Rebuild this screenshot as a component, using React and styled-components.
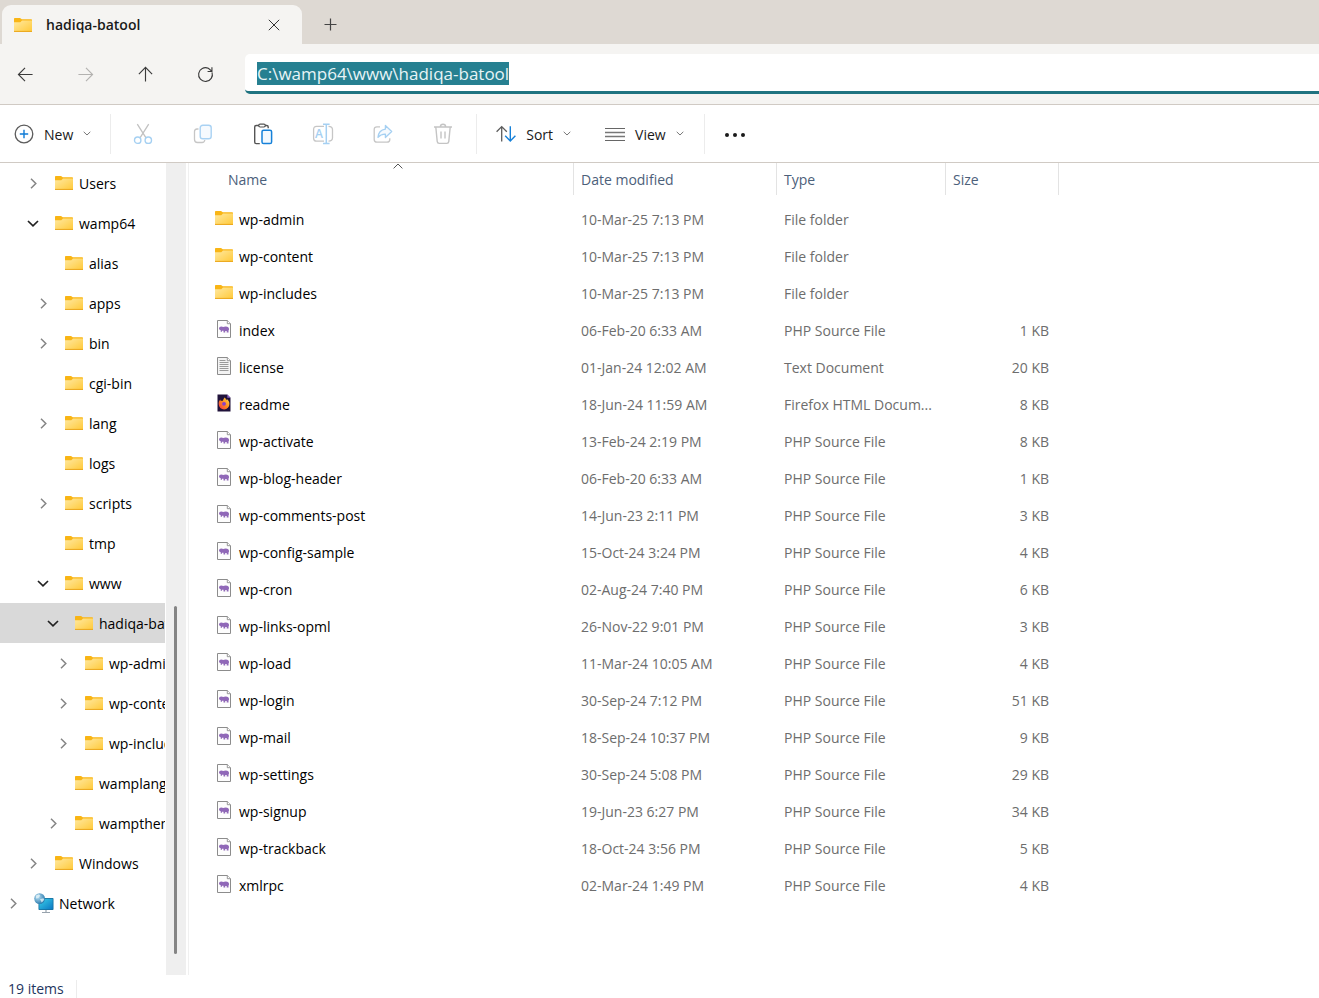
import { useEffect, useRef } from "react";
import styled, { createGlobalStyle } from "styled-components";

const tree = [
  { name: "Users", depth: 2, state: "closed" },
  { name: "wamp64", depth: 2, state: "open" },
  { name: "alias", depth: 3 },
  { name: "apps", depth: 3, state: "closed" },
  { name: "bin", depth: 3, state: "closed" },
  { name: "cgi-bin", depth: 3 },
  { name: "lang", depth: 3, state: "closed" },
  { name: "logs", depth: 3 },
  { name: "scripts", depth: 3, state: "closed" },
  { name: "tmp", depth: 3 },
  { name: "www", depth: 3, state: "open" },
  { name: "hadiqa-batool", depth: 4, state: "open", selected: true },
  { name: "wp-admin", depth: 5, state: "closed" },
  { name: "wp-content", depth: 5, state: "closed" },
  { name: "wp-includes", depth: 5, state: "closed" },
  { name: "wamplangues", depth: 4 },
  { name: "wampthemes", depth: 4, state: "closed" },
  { name: "Windows", depth: 2, state: "closed" },
  { name: "Network", depth: 0, state: "closed", icon: "network" },
];

const files = [
  ["folder", "wp-admin", "10-Mar-25 7:13 PM", "File folder", ""],
  ["folder", "wp-content", "10-Mar-25 7:13 PM", "File folder", ""],
  ["folder", "wp-includes", "10-Mar-25 7:13 PM", "File folder", ""],
  ["php", "index", "06-Feb-20 6:33 AM", "PHP Source File", "1 KB"],
  ["text", "license", "01-Jan-24 12:02 AM", "Text Document", "20 KB"],
  ["firefox", "readme", "18-Jun-24 11:59 AM", "Firefox HTML Docum...", "8 KB"],
  ["php", "wp-activate", "13-Feb-24 2:19 PM", "PHP Source File", "8 KB"],
  ["php", "wp-blog-header", "06-Feb-20 6:33 AM", "PHP Source File", "1 KB"],
  ["php", "wp-comments-post", "14-Jun-23 2:11 PM", "PHP Source File", "3 KB"],
  ["php", "wp-config-sample", "15-Oct-24 3:24 PM", "PHP Source File", "4 KB"],
  ["php", "wp-cron", "02-Aug-24 7:40 PM", "PHP Source File", "6 KB"],
  ["php", "wp-links-opml", "26-Nov-22 9:01 PM", "PHP Source File", "3 KB"],
  ["php", "wp-load", "11-Mar-24 10:05 AM", "PHP Source File", "4 KB"],
  ["php", "wp-login", "30-Sep-24 7:12 PM", "PHP Source File", "51 KB"],
  ["php", "wp-mail", "18-Sep-24 10:37 PM", "PHP Source File", "9 KB"],
  ["php", "wp-settings", "30-Sep-24 5:08 PM", "PHP Source File", "29 KB"],
  ["php", "wp-signup", "19-Jun-23 6:27 PM", "PHP Source File", "34 KB"],
  ["php", "wp-trackback", "18-Oct-24 3:56 PM", "PHP Source File", "5 KB"],
  ["php", "xmlrpc", "02-Mar-24 1:49 PM", "PHP Source File", "4 KB"],
];

export default function App() {
  const addressRef = useRef(null);

  useEffect(() => {
    addressRef.current.focus();
    addressRef.current.select();
  }, []);

  return (
    <StyledWindow>
      <GlobalStyle />
      <IconGradients />
      <StyledTabBar>
        <StyledTab>
          <FolderIcon />
          <StyledTabTitle>hadiqa-batool</StyledTabTitle>
          <StyledTabButton type="button" aria-label="Close tab">
            <svg width="12" height="12" viewBox="0 0 12 12">
              <path d="M.8.8l10.4 10.4M11.2.8L.8 11.2" stroke="#333" />
            </svg>
          </StyledTabButton>
        </StyledTab>
        <StyledTabButton type="button" aria-label="New tab">
          <svg width="13" height="13" viewBox="0 0 13 13">
            <path d="M6.5.5v12M.5 6.5h12" stroke="#444" strokeWidth="1.2" />
          </svg>
        </StyledTabButton>
      </StyledTabBar>

      <StyledNav>
        <StyledNavButtons>
          <NavButton label="Back" d="M16.5 9H1.5M8.5 2L1.5 9l7 7" />
          <NavButton
            label="Forward"
            d="M1.5 9h15M9.5 2l7 7-7 7"
            color="#b3b2b0"
          />
          <NavButton label="Up" d="M9 16.5v-15M2 8.5l7-7 7 7" />
          <NavButton
            label="Refresh"
            d="M15.9 6.7A7.3 7.3 0 1 1 12 2.4L15.6 5.4M15.8 1.2v4.6h-4.6"
          />
        </StyledNavButtons>
        <StyledAddress
          ref={addressRef}
          type="text"
          aria-label="Address"
          spellCheck={false}
          defaultValue="C:\wamp64\www\hadiqa-batool"
        />
      </StyledNav>

      <StyledToolbar>
        <StyledToolGroup>
          <StyledMenuButton type="button">
            <NewIcon />
            <StyledLabel>New</StyledLabel>
            <ChevronDown />
          </StyledMenuButton>
        </StyledToolGroup>
        <StyledToolGroup>
          <StyledToolButton type="button" aria-label="Cut">
            <CutIcon />
          </StyledToolButton>
          <StyledToolButton type="button" aria-label="Copy">
            <CopyIcon />
          </StyledToolButton>
          <StyledToolButton type="button" aria-label="Paste">
            <PasteIcon />
          </StyledToolButton>
          <StyledToolButton type="button" aria-label="Rename">
            <RenameIcon />
          </StyledToolButton>
          <StyledToolButton type="button" aria-label="Share">
            <ShareIcon />
          </StyledToolButton>
          <StyledToolButton type="button" aria-label="Delete">
            <DeleteIcon />
          </StyledToolButton>
        </StyledToolGroup>
        <StyledToolGroup>
          <StyledMenuButton type="button" $wide>
            <SortIcon />
            <StyledLabel>Sort</StyledLabel>
            <ChevronDown />
          </StyledMenuButton>
          <StyledMenuButton type="button" $wide>
            <ViewIcon />
            <StyledLabel>View</StyledLabel>
            <ChevronDown />
          </StyledMenuButton>
        </StyledToolGroup>
        <StyledToolButton type="button" aria-label="See more">
          <svg width="22" height="6" viewBox="0 0 22 6">
            <g fill="#1a1a1a">
              <circle cx="3" cy="4" r="2" />
              <circle cx="11" cy="4" r="2" />
              <circle cx="19" cy="4" r="2" />
            </g>
          </svg>
        </StyledToolButton>
      </StyledToolbar>

      <StyledMain>
        <StyledTree aria-label="Folders">
          {tree.map((node) => (
            <StyledTreeRow
              key={node.name}
              type="button"
              $depth={node.depth}
              $selected={node.selected}
            >
              <StyledTwisty>
                {node.state && <Twisty open={node.state === "open"} />}
              </StyledTwisty>
              <StyledTreeIcon>
                {node.icon === "network" ? <NetworkIcon /> : <FolderIcon />}
              </StyledTreeIcon>
              <StyledLabel>{node.name}</StyledLabel>
            </StyledTreeRow>
          ))}
        </StyledTree>
        <StyledScrollbar>
          <StyledThumb />
        </StyledScrollbar>
        <StyledFilePane>
          <StyledTable>
            <colgroup>
              <StyledCol $width={385} />
              <StyledCol $width={203} />
              <StyledCol $width={169} />
              <StyledCol $width={113} />
            </colgroup>
            <thead>
              <tr>
                <StyledTh>
                  <StyledSortButton type="button" $inset>
                    <StyledLabel>Name</StyledLabel>
                    <StyledSortMark width="10" height="6" viewBox="0 0 10 6">
                      <path d="M.6 5.4L5 1l4.4 4.4" fill="none" stroke="#555" />
                    </StyledSortMark>
                  </StyledSortButton>
                </StyledTh>
                <StyledTh>
                  <StyledSortButton type="button">
                    <StyledLabel>Date modified</StyledLabel>
                  </StyledSortButton>
                </StyledTh>
                <StyledTh>
                  <StyledSortButton type="button">
                    <StyledLabel>Type</StyledLabel>
                  </StyledSortButton>
                </StyledTh>
                <StyledTh>
                  <StyledSortButton type="button">
                    <StyledLabel>Size</StyledLabel>
                  </StyledSortButton>
                </StyledTh>
              </tr>
            </thead>
            <tbody>
              {files.map(([icon, name, date, type, size]) => (
                <tr key={name}>
                  <StyledNameCell>
                    <StyledName>
                      <StyledFileIcon>
                        <FileIcon kind={icon} />
                      </StyledFileIcon>
                      {name}
                    </StyledName>
                  </StyledNameCell>
                  <StyledTd>{date}</StyledTd>
                  <StyledTd>{type}</StyledTd>
                  <StyledTd $right>{size}</StyledTd>
                </tr>
              ))}
            </tbody>
          </StyledTable>
        </StyledFilePane>
      </StyledMain>

      <StyledStatus>
        <StyledCount>19 items</StyledCount>
      </StyledStatus>
    </StyledWindow>
  );
}

function NavButton({ label, d, color = "#3b3b3b" }) {
  return (
    <StyledNavButton type="button" aria-label={label}>
      <svg width="17" height="17" viewBox="0 0 18 18" fill="none">
        <path d={d} stroke={color} strokeWidth="1.2" />
      </svg>
    </StyledNavButton>
  );
}

function ChevronDown() {
  return (
    <svg width="8" height="5" viewBox="0 0 8 5" fill="none">
      <path d="M.7.8L4 4 7.3.8" stroke="#777" />
    </svg>
  );
}

function Twisty({ open }) {
  return open ? (
    <svg width="12" height="7" viewBox="0 0 12 7" fill="none">
      <path d="M1 1l5 4.8L11 1" stroke="#222" strokeWidth="1.7" />
    </svg>
  ) : (
    <svg width="7" height="11" viewBox="0 0 7 11" fill="none">
      <path d="M1 .8l4.8 4.7L1 10.2" stroke="#858585" strokeWidth="1.5" />
    </svg>
  );
}

// gradients shared by all the small icons
function IconGradients() {
  return (
    <StyledDefs aria-hidden="true">
      <defs>
        <linearGradient id="folder" x1="0" y1="0" x2="1" y2="1">
          <stop offset="0" stopColor="#ffe9a2" />
          <stop offset="1" stopColor="#ffc938" />
        </linearGradient>
        <linearGradient id="screen" x1="0" y1="0" x2="1" y2="1">
          <stop offset="0" stopColor="#3bd0e8" />
          <stop offset="1" stopColor="#0b78c4" />
        </linearGradient>
        <radialGradient id="globe" cx=".35" cy=".35" r=".7">
          <stop offset="0" stopColor="#b9dff2" />
          <stop offset="1" stopColor="#2879ad" />
        </radialGradient>
        <linearGradient id="fire" x1="1" y1="0" x2="0" y2="1">
          <stop offset="0" stopColor="#ffe04a" />
          <stop offset=".5" stopColor="#ff8a1e" />
          <stop offset="1" stopColor="#f5304f" />
        </linearGradient>
      </defs>
    </StyledDefs>
  );
}

function FolderIcon() {
  return (
    <svg width="18" height="14" viewBox="0 0 18 14">
      <path d="M0 .8Q0 0 .8 0H6l1.8 1.3h9.4q.8 0 .8.8V6H0z" fill="#f9b515" />
      <path d="M0 4.2h6.3L8 2.4h10V14H0z" fill="url(#folder)" />
      <path d="M0 13.4h18" stroke="#eaa61c" />
    </svg>
  );
}

function NetworkIcon() {
  return (
    <svg width="20" height="20" viewBox="0 0 20 20">
      <path d="M12 17v2.4M8 19.5h8" stroke="#98a3ad" strokeWidth="1.2" />
      <rect x="4.5" y="5" width="15" height="12" rx=".8" fill="#156f9d" />
      <rect x="5.3" y="5.8" width="13.4" height="10.4" fill="url(#screen)" />
      <circle cx="5.6" cy="5.6" r="5.4" fill="url(#globe)" />
      <path
        d="M2 2.6l3-1.4 1.2 1.6-2 2.2L2 5.4zM6 6.2l3.4-1 .8 1.6-2.4 2.8z"
        fill="#e4f2f8"
        opacity=".8"
      />
    </svg>
  );
}

function FileIcon({ kind }) {
  if (kind === "folder") return <FolderIcon />;
  if (kind === "firefox") {
    return (
      <svg width="14" height="18" viewBox="0 0 14 18">
        <path d="M.5.5h9.8l3.2 3.2v13.8H.5z" fill="#20123a" />
        <path d="M10.3.5l3.2 3.2h-3.2z" fill="#8a63c9" />
        <path
          d="M7.6 3.6c1.2 1 1.4 1.7 1.5 2.6.5-.3.7-.6.7-1.1 1.6 1.3 2.8 3 2.6 4.9a5.3 5.3 0 0 1-10.7.2c-.1-1.8.4-3.3 1.7-4.6 0 .6.1 1 .4 1.4.7-.5 1.6-.4 2.1-.2.4-1.2.9-2.4 1.7-3.2z"
          fill="url(#fire)"
        />
        <circle cx="7" cy="9.8" r="1.9" fill="#8a3fc8" />
      </svg>
    );
  }
  return (
    <svg width="14" height="18" viewBox="0 0 14 18">
      <path
        d="M.5.5h9.8l3.2 3.2v13.8H.5z"
        fill={kind === "text" ? "#f3f3f3" : "#fdfdfd"}
        stroke="#8c8c8c"
      />
      <path d="M10.3.5v3.2h3.2" fill="#fff" stroke="#8c8c8c" strokeWidth=".9" />
      {kind === "text" ? (
        <path
          d="M2.5 3.5h6M2.5 5.5h9M2.5 7.5h9M2.5 9.5h9M2.5 11.5h9M2.5 13.5h9"
          stroke="#9a9a9a"
        />
      ) : (
        <path
          d="M2 8.3q.2-1.9 2.2-1.9 1.3 0 2 .6.8-.6 2.6-.6 3.2 0 3.2 2.6 0 1-.5 1.6v2H9.7v-1.5H8.2v1.5H6.5v-1.9H5v1.1H3.7v-1.5Q1.8 10 2 8.3z"
          fill="#9068b8"
        />
      )}
    </svg>
  );
}

function NewIcon() {
  return (
    <svg width="20" height="20" viewBox="0 0 20 20" fill="none">
      <circle cx="10" cy="10" r="8.8" stroke="#5c5c5c" strokeWidth="1.3" />
      <path d="M10 5.8v8.4M5.8 10h8.4" stroke="#0f7bd6" strokeWidth="1.4" />
    </svg>
  );
}

function CutIcon() {
  return (
    <svg width="20" height="22" viewBox="0 0 20 22" fill="none">
      <path d="M4.3 1.2l8.7 13.6M15.7 1.2L7 14.8" stroke="#c2c2c2" strokeWidth="1.3" />
      <g stroke="#a5d0f2" strokeWidth="1.4">
        <circle cx="4.7" cy="17.2" r="3.2" />
        <circle cx="15.3" cy="17.2" r="3.2" />
      </g>
    </svg>
  );
}

function CopyIcon() {
  return (
    <svg width="20" height="20" viewBox="0 0 20 20" fill="none">
      <path
        d="M5.5 5H4Q1.5 5 1.5 7.5v8Q1.5 18.5 4.5 18.5H9q2.5 0 2.8-2.5"
        stroke="#c6c6c6"
        strokeWidth="1.3"
      />
      <rect
        x="7.2"
        y="1.2"
        width="11"
        height="13.6"
        rx="2.6"
        fill="#f6fafe"
        stroke="#a9d2f3"
        strokeWidth="1.4"
      />
    </svg>
  );
}

function PasteIcon() {
  return (
    <svg width="20" height="22" viewBox="0 0 20 22" fill="none">
      <path
        d="M6 2.5H3.2Q1.7 2.5 1.7 4v15q0 1.6 1.5 1.6h3.6M12 2.5h1.8q1.4 0 1.4 1.5v1.3"
        stroke="#555"
        strokeWidth="1.4"
      />
      <rect x="5.7" y="1.2" width="6.6" height="2.8" rx="1.4" stroke="#555" strokeWidth="1.2" />
      <rect
        x="9"
        y="7.2"
        width="9.6"
        height="13.4"
        rx="1.6"
        fill="#f3f9fe"
        stroke="#1681d9"
        strokeWidth="1.5"
      />
    </svg>
  );
}

function RenameIcon() {
  return (
    <svg width="22" height="22" viewBox="0 0 22 22" fill="none">
      <path
        d="M12 3.4H4.6Q1.6 3.4 1.6 6.4v8.8q0 3 3 3H12M16.5 3.4q4 0 4 3.4v8q0 3.4-4 3.4"
        stroke="#c6c6c6"
        strokeWidth="1.3"
      />
      <path d="M11 1.2h6.6M11 20.6h6.6M14.3 1.2v19.4" stroke="#a5d0f2" strokeWidth="1.5" />
      <StyledRenameLetter x="3" y="15">
        A
      </StyledRenameLetter>
    </svg>
  );
}

function ShareIcon() {
  return (
    <svg width="20" height="20" viewBox="0 0 20 20" fill="none">
      <path
        d="M7 2.8H4Q1.2 2.8 1.2 5.6v9.8q0 2.8 2.8 2.8h10q2.8 0 2.8-2.8v-1.2"
        stroke="#c6c6c6"
        strokeWidth="1.3"
      />
      <path
        d="M12.4 1.5l6.3 6-6.3 6v-3.4q-4.5-.2-7.4 3.3.4-7.3 7.4-8.3z"
        fill="#f6fafe"
        stroke="#a5d0f2"
        strokeWidth="1.3"
        strokeLinejoin="round"
      />
    </svg>
  );
}

function DeleteIcon() {
  return (
    <svg width="20" height="22" viewBox="0 0 20 22" fill="none">
      <path
        d="M1 4h18M7.4 3.8Q7.4 1.2 10 1.2t2.6 2.6M2.8 4l1.4 14.4q.2 2 2 2h7.6q1.8 0 2-2L17.2 4M8 8.6v7M12 8.6v7"
        stroke="#c4c4c4"
        strokeWidth="1.4"
      />
    </svg>
  );
}

function SortIcon() {
  return (
    <svg width="20" height="18" viewBox="0 0 20 18" fill="none">
      <path d="M5.7 16.4V1.6M.6 6.8l5.1-5.2 5.1 5.2" stroke="#5c5c5c" strokeWidth="1.3" />
      <path d="M14.3 1.2v14.8M9.2 10.8l5.1 5.2 5.1-5.2" stroke="#1681d9" strokeWidth="1.4" />
    </svg>
  );
}

function ViewIcon() {
  return (
    <svg width="20" height="14" viewBox="0 0 20 14">
      <path d="M0 1.5h20M0 13.5h20" stroke="#666" />
      <path d="M0 5.5h20M0 9.5h20" stroke="#777" strokeWidth="1.4" />
    </svg>
  );
}

const GlobalStyle = createGlobalStyle`
  * {
    box-sizing: border-box;
  }
  body {
    margin: 0;
    background-color: white;
    font-family: "Open Sans", "Noto Sans", sans-serif;
    font-size: 14px;
    line-height: 20px;
    color: #1a1a1a;
  }
  button {
    border: none;
    background-color: transparent;
    padding: 0;
    font: inherit;
    color: inherit;
  }
  svg {
    flex-shrink: 0;
  }
`;

const StyledDefs = styled.svg`
  position: absolute;
  width: 0;
  height: 0;
`;

const StyledWindow = styled.div`
  min-height: 100vh;
  display: flex;
  flex-direction: column;
`;

const StyledTabBar = styled.header`
  display: flex;
  padding: 5px 2px 0;
  background-color: #ded9d3;
`;

const StyledTab = styled.div`
  display: flex;
  align-items: center;
  gap: 14px;
  width: 300px;
  height: 39px;
  padding-left: 12px;
  border-radius: 9px 9px 0 0;
  background-color: #f5f4f2;
`;

const StyledTabTitle = styled.span`
  flex: 1;
  font-weight: 600;
`;

const StyledTabButton = styled.button`
  display: flex;
  align-items: center;
  justify-content: center;
  width: 56px;
  height: 39px;
`;

const StyledNav = styled.nav`
  display: flex;
  align-items: center;
  height: 61px;
  border-bottom: 1px solid #d0cac4;
  background-color: #f5f4f2;
`;

const StyledNavButtons = styled.div`
  display: flex;
  width: 245px;
  padding-left: 5px;
  gap: 20px;
`;

const StyledNavButton = styled.button`
  display: flex;
  align-items: center;
  justify-content: center;
  width: 40px;
  height: 40px;
`;

const StyledAddress = styled.input`
  flex: 1;
  min-width: 0;
  height: 40px;
  padding: 1px 12px 0;
  border: none;
  border-bottom: 3px solid #1f7380;
  border-radius: 5px 0 0 5px;
  background-color: white;
  font-family: inherit;
  font-size: 17px;
  color: #1a1a1a;
  outline: none;
  &::selection {
    background-color: #268091;
    color: #e8f4f6;
  }
`;

const StyledToolbar = styled.div`
  display: flex;
  align-items: center;
  height: 58px;
  border-bottom: 1px solid #d0cac4;
`;

const StyledToolGroup = styled.div`
  display: flex;
  height: 40px;
  padding: 0 3px 0 2px;
  border-right: 1px solid #ececec;
`;

const StyledToolButton = styled.button`
  display: flex;
  align-items: center;
  justify-content: center;
  width: 60px;
  height: 40px;
`;

const StyledMenuButton = styled.button`
  display: flex;
  align-items: center;
  gap: 10px;
  height: 40px;
  padding: ${({ $wide }) => ($wide ? "0 17px" : "0 16px 0 12px")};
`;

const StyledLabel = styled.span`
  padding-top: 2px;
`;

const StyledRenameLetter = styled.text`
  font-size: 12px;
  font-weight: 600;
  fill: #a5d0f2;
`;

const StyledMain = styled.main`
  display: flex;
  flex: 1;
`;

const StyledTree = styled.nav`
  width: 165px;
  overflow: hidden;
`;

const StyledTreeRow = styled.button`
  display: flex;
  align-items: center;
  width: 100%;
  height: 40px;
  padding-left: ${({ $depth }) => 5 + $depth * 10}px;
  background-color: ${({ $selected }) => ($selected ? "#d9d9d9" : "white")};
  color: black;
  white-space: nowrap;
`;

const StyledTwisty = styled.span`
  display: flex;
  justify-content: center;
  flex-shrink: 0;
  width: 16px;
`;

const StyledTreeIcon = styled.span`
  display: flex;
  justify-content: center;
  flex-shrink: 0;
  width: 20px;
  margin: 0 5px 0 13px;
`;

const StyledScrollbar = styled.div`
  width: 20px;
  margin-left: 1px;
  padding: 443px 8px 21px;
  background-color: #efefef;
`;

const StyledThumb = styled.div`
  width: 3px;
  height: 100%;
  border-radius: 2px;
  background-color: #858585;
`;

const StyledFilePane = styled.section`
  flex: 1;
  min-width: 0;
  margin-left: 2px;
  border-left: 1px solid #f0f0f0;
`;

const StyledTable = styled.table`
  table-layout: fixed;
  width: 870px;
  border-collapse: collapse;
`;

const StyledCol = styled.col`
  width: ${({ $width }) => $width}px;
`;

const StyledTh = styled.th`
  padding: 0 0 6px;
  font-weight: 400;
`;

const StyledSortButton = styled.button`
  position: relative;
  display: flex;
  align-items: center;
  width: 100%;
  height: 32px;
  padding-left: ${({ $inset }) => ($inset ? 39 : 7)}px;
  border-right: 1px solid #e3e3e3;
  color: #4c607a;
`;

const StyledSortMark = styled.svg`
  position: absolute;
  top: 0;
  right: 170px;
`;

const StyledTd = styled.td`
  height: 37px;
  padding: 0 10px 0 7px;
  overflow: hidden;
  color: #6d6d6d;
  text-align: ${({ $right }) => ($right ? "right" : "left")};
  white-space: nowrap;
`;

const StyledNameCell = styled(StyledTd)`
  padding-left: 26px;
  color: black;
`;

const StyledName = styled.div`
  display: flex;
  align-items: center;
  gap: 6px;
`;

const StyledFileIcon = styled.span`
  display: flex;
  justify-content: center;
  width: 18px;
  padding-bottom: 4px;
`;

const StyledStatus = styled.footer`
  display: flex;
  height: 23px;
  padding: 5px 8px 0;
  color: #1e3560;
`;

const StyledCount = styled.span`
  padding-right: 12px;
  border-right: 1px solid #ececec;
  line-height: 18px;
`;
